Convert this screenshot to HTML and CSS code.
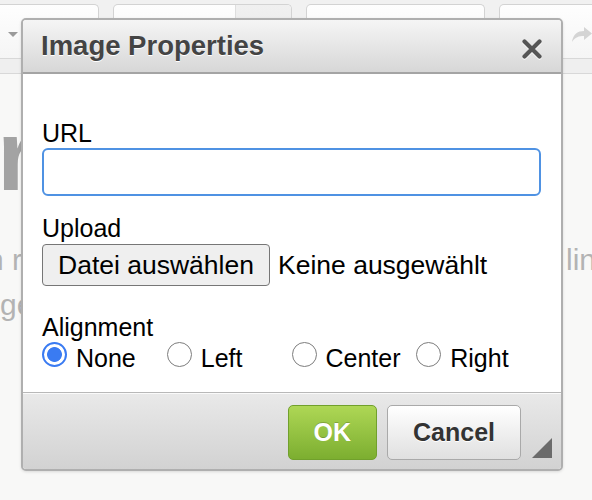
FILE: index.html
```html
<!DOCTYPE html>
<html lang="en">
<head>
<meta charset="utf-8">
<title>Image Properties</title>
<link rel="stylesheet" href="styles.css">
</head>
<body>
<div class="page">
  <div class="toolbar">
    <div class="tb-group tb-first"><span class="caret"></span></div>
    <div class="tb-group tb-second"><span class="tb-pressed"></span></div>
    <div class="tb-group"></div>
    <div class="tb-group tb-last">
      <svg class="redo" width="22" height="16" viewBox="0 0 22 16"><path d="M1 15 C2 7 7 4 13 4 L13 0 L21 6.5 L13 13 L13 9 C8 9 4 10 1 15 Z" fill="#d4d4d4"/></svg>
    </div>
  </div>
  <div class="subbar"></div>
  <div class="content">
    <h1 class="bg-title">r</h1>
    <p class="bg-text bg-split"><span>n r</span><span>lin</span></p>
    <p class="bg-text">ge</p>
  </div>
</div>

<div class="dialog">
  <div class="dlg-header">
    <span class="dlg-title">Image Properties</span>
    <svg class="dlg-close" width="20" height="20" viewBox="0 0 20 20"><path d="M2.5 2.5 L17.5 17.5 M17.5 2.5 L2.5 17.5" stroke="#555" stroke-width="4.2" stroke-linecap="round"/></svg>
  </div>
  <div class="dlg-body">
    <label class="field-label" for="url">URL</label>
    <input class="url-input" id="url" type="text">
    <div class="field-label gap-upload">Upload</div>
    <div class="file-row">
      <button class="file-btn" type="button">Datei auswählen</button>
      <span class="file-name">Keine ausgewählt</span>
    </div>
    <div class="field-label gap-align">Alignment</div>
    <div class="radio-row">
      <label class="opt"><input type="radio" name="align" checked><span>None</span></label>
      <label class="opt"><input type="radio" name="align"><span>Left</span></label>
      <label class="opt"><input type="radio" name="align"><span>Center</span></label>
      <label class="opt"><input type="radio" name="align"><span>Right</span></label>
    </div>
  </div>
  <div class="dlg-footer">
    <button class="btn btn-ok" type="button">OK</button>
    <button class="btn btn-cancel" type="button">Cancel</button>
    <span class="grip"></span>
  </div>
</div>
</body>
</html>
```
FILE: styles.css
```css
html, body {
  margin: 0;
  padding: 0;
}
body {
  background: #f8f8f7;
  font-family: "Liberation Sans", Arial, sans-serif;
  width: 592px;
  height: 500px;
  overflow: hidden;
  position: relative;
}
.page {
  overflow: hidden;
  width: 592px;
}
.toolbar {
  height: 59px;
  box-sizing: border-box;
  background: #f1f1f1;
  border-bottom: 1px solid #d8d8d8;
  padding-top: 4px;
  display: flex;
  gap: 14px;
  margin-left: -80px;
}
.tb-group {
  flex: 0 0 auto;
  width: 179px;
  height: 54px;
  box-sizing: border-box;
  border: 1px solid #d3d3d3;
  border-bottom: none;
  border-radius: 5px 5px 0 0;
  background: linear-gradient(#fefefe, #f5f5f5);
  display: flex;
}
.tb-first {
  padding: 27px 0 0 87px;
}
.caret {
  width: 0;
  height: 0;
  border-left: 5px solid transparent;
  border-right: 5px solid transparent;
  border-top: 5px solid #9a9a9a;
}
.tb-second {
  justify-content: flex-end;
}
.tb-pressed {
  width: 55px;
  background: linear-gradient(#f0f0f0, #e8e8e8);
  border-left: 1px solid #dedede;
  border-radius: 0 4px 0 0;
}
.tb-last {
  width: 200px;
  padding: 22px 0 0 71px;
}
.subbar {
  height: 15px;
  box-sizing: border-box;
  background: #efefef;
  border-bottom: 1px solid #d8d8d8;
}
.content {
  padding-top: 31px;
}
.bg-title {
  margin: 0 0 0 -3px;
  font-size: 100px;
  line-height: 100px;
  font-weight: bold;
  color: #a3a3a3;
}
.bg-text {
  margin: 0;
  font-size: 30px;
  line-height: 45px;
  color: #b3b3b3;
}
.bg-split {
  margin-top: 32px;
  margin-left: -13px;
  width: 609px;
  display: flex;
  justify-content: space-between;
}

/* dialog */
.dialog {
  position: absolute;
  left: 21px;
  top: 18px;
  width: 542px;
  height: 453px;
  box-sizing: border-box;
  border: 2px solid #afafaf;
  border-radius: 5px;
  overflow: hidden;
  display: flex;
  flex-direction: column;
  background: #fff;
  box-shadow: 0 1px 3px rgba(0, 0, 0, 0.12);
}
.dlg-header {
  height: 54px;
  flex: 0 0 auto;
  box-sizing: border-box;
  border-bottom: 2px solid #a4a4a4;
  background: linear-gradient(#f5f5f5, #d7d7d7);
  display: flex;
  justify-content: space-between;
  align-items: flex-start;
  padding: 0 19px 0 18px;
}
.dlg-title {
  font-size: 27.5px;
  line-height: 52px;
  font-weight: bold;
  color: #444;
  text-shadow: 0 1px 0 #fff;
}
.dlg-close {
  margin-top: 19px;
  filter: drop-shadow(0 1px 0 #fff);
}
.dlg-body {
  flex: 1 1 auto;
  padding: 44px 20px 0 19px;
  color: #000;
}
.field-label {
  display: block;
  font-size: 25px;
  line-height: 30px;
}
.url-input {
  display: block;
  width: 100%;
  height: 48px;
  box-sizing: border-box;
  margin: 0;
  border: 2px solid #4f92e3;
  border-radius: 6px;
  outline: none;
  background: #fff;
  font-size: 25px;
}
.gap-upload {
  margin-top: 17px;
}
.file-row {
  display: flex;
  align-items: center;
  gap: 8px;
  margin-top: 1px;
}
.file-btn {
  height: 42px;
  width: 228px;
  box-sizing: border-box;
  margin: 0;
  padding: 0;
  background: #efefef;
  border: 1px solid #767676;
  border-radius: 4px;
  font-family: inherit;
  font-size: 26.5px;
  color: #000;
}
.file-name {
  font-size: 26.5px;
  line-height: 30px;
}
.gap-align {
  margin-top: 26px;
}
.radio-row {
  display: grid;
  grid-template-columns: repeat(4, 1fr);
}
.opt {
  display: flex;
  align-items: flex-start;
  gap: 9px;
  font-size: 25px;
  line-height: 30px;
}
.opt span {
  padding-top: 1px;
}
.opt input {
  appearance: none;
  -webkit-appearance: none;
  margin: 0;
  width: 25px;
  height: 25px;
  box-sizing: border-box;
  border-radius: 50%;
  border: 1.5px solid #7d7d7d;
  background: #fff;
}
.opt input:checked {
  border: 2.5px solid #3a7bf2;
  background: radial-gradient(circle, #3a7bf2 0 7px, #fff 7.8px);
}
.dlg-footer {
  position: relative;
  flex: 0 0 77px;
  box-sizing: border-box;
  border-top: 1px solid #b8b8b8;
  box-shadow: inset 0 1px 0 #fafafa;
  background: linear-gradient(#e9e9e9, #d2d2d2);
  display: flex;
  justify-content: flex-end;
  align-items: flex-start;
  gap: 10px;
  padding: 12px 40px 0 0;
}
.btn {
  height: 55px;
  margin: 0;
  padding: 0 25px;
  box-sizing: border-box;
  border-radius: 5px;
  font-family: inherit;
  font-size: 25px;
  font-weight: bold;
}
.btn-ok {
  background: linear-gradient(#aed755, #7cae30);
  border: 1px solid #71a02c;
  color: #fff;
  text-shadow: 0 -1px 0 rgba(0, 0, 0, 0.2);
}
.btn-cancel {
  background: linear-gradient(#ffffff, #e0e0e0);
  border: 1px solid #a9a9a9;
  color: #333;
  text-shadow: 0 1px 0 #fff;
}
.grip {
  position: absolute;
  right: 9px;
  bottom: 11px;
  width: 20px;
  height: 20px;
  background: #6b6b6b;
  clip-path: polygon(100% 0, 100% 100%, 0 100%);
}
```
